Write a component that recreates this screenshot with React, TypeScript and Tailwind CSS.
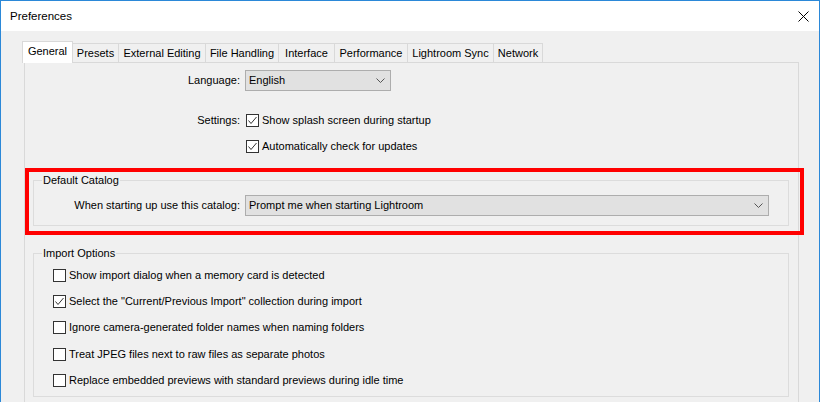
const tabs = [
  { name: "General", w: "w-[51px]" },
  { name: "Presets", w: "w-[46px]" },
  { name: "External Editing", w: "w-[87px]" },
  { name: "File Handling", w: "w-[73px]" },
  { name: "Interface", w: "w-[56px]" },
  { name: "Performance", w: "w-[73px]" },
  { name: "Lightroom Sync", w: "w-[86px]" },
  { name: "Network", w: "w-[49px]" },
];

const importOptions = [
  { label: "Show import dialog when a memory card is detected", checked: false },
  { label: 'Select the "Current/Previous Import" collection during import', checked: true },
  { label: "Ignore camera-generated folder names when naming folders", checked: false },
  { label: "Treat JPEG files next to raw files as separate photos", checked: false },
  { label: "Replace embedded previews with standard previews during idle time", checked: false },
];

function Checkbox({ checked }: { checked: boolean }) {
  return (
    <span className="flex h-[13px] w-[13px] shrink-0 items-center justify-center border border-[#333] bg-white">
      {checked && (
        <svg width="11" height="11" viewBox="0 0 11 11">
          <polyline points="1.5,5.5 4,8.5 9.5,2" fill="none" stroke="#333" strokeWidth="1" />
        </svg>
      )}
    </span>
  );
}

function Select({ value, width }: { value: string; width: string }) {
  return (
    <div className={`flex h-[21px] ${width} items-center justify-between border border-[#adadad] bg-[#e1e1e1] pl-[3px] pr-[5px]`}>
      <span>{value}</span>
      <svg width="9" height="5" viewBox="0 0 9 5">
        <polyline points="0.5,0.5 4.5,4.5 8.5,0.5" fill="none" stroke="#555" strokeWidth="1" />
      </svg>
    </div>
  );
}

export default function App() {
  return (
    <div
      className="relative flex h-[402px] w-[820px] flex-col overflow-hidden border-x border-t border-[#2b88d8] text-[11px] leading-[15px] text-black"
      style={{ fontFamily: '"Liberation Sans", Arial, sans-serif' }}
    >
      {/* title bar */}
      <div className="flex h-[30px] shrink-0 items-center justify-between bg-white pl-[9px] pr-[10px]">
        <span className="text-[11.5px]">Preferences</span>
        <svg width="11" height="11" viewBox="0 0 11 11">
          <path d="M0.5 0.5 L10.5 10.5 M10.5 0.5 L0.5 10.5" stroke="#000" strokeWidth="1" />
        </svg>
      </div>

      <div className="flex flex-1 flex-col bg-[#f0f0f0] pl-[21px] pt-[10px]">
        {/* tabs */}
        <div className="relative z-10 flex h-[21px] items-end">
          {tabs.map((t, i) =>
            i === 0 ? (
              <div
                key={t.name}
                className={`${t.w} -mb-px flex h-[22px] items-start justify-center border-x border-t border-[#d9d9d9] bg-white pt-[2px]`}
              >
                {t.name}
              </div>
            ) : (
              <div
                key={t.name}
                className={`${t.w} flex h-[19px] items-center justify-center border-r border-t border-[#d9d9d9] bg-[#f0f0f0]`}
              >
                {t.name}
              </div>
            )
          )}
        </div>

        {/* panel */}
        <div className="ml-[2px] flex h-[400px] w-[775px] flex-col border border-[#d9d9d9] bg-[#f0f0f0]">
          <div className="mt-[7px] flex h-[21px] items-center">
            <span className="w-[215px] text-right">Language:</span>
            <div className="ml-[5px]">
              <Select value="English" width="w-[146px]" />
            </div>
          </div>

          <div className="mt-[22px] flex h-[14px] items-center">
            <span className="w-[215px] text-right">Settings:</span>
            <div className="ml-[6px] flex items-center gap-[3px]">
              <Checkbox checked />
              <span>Show splash screen during startup</span>
            </div>
          </div>
          <div className="mt-[12px] flex h-[14px] items-center pl-[221px]">
            <div className="flex items-center gap-[3px]">
              <Checkbox checked />
              <span>Automatically check for updates</span>
            </div>
          </div>

          {/* Default Catalog */}
          <fieldset className="ml-[8px] mt-[21px] w-[756px] border border-[#dcdcdc] pb-[9px]">
            <legend className="ml-[8px] px-px text-[11px] leading-[13px]">Default Catalog</legend>
            <div className="mt-[8px] flex h-[21px] items-center">
              <span className="w-[206px] text-right">When starting up use this catalog:</span>
              <div className="ml-[5px]">
                <Select value="Prompt me when starting Lightroom" width="w-[524px]" />
              </div>
            </div>
          </fieldset>

          {/* Import Options */}
          <fieldset className="ml-[8px] mt-[21px] w-[756px] border border-[#dcdcdc] pb-[3px]">
            <legend className="ml-[8px] px-px text-[11px] leading-[13px]">Import Options</legend>
            <div className="mt-[2px] flex flex-col">
              {importOptions.map((o) => (
                <div key={o.label} className="flex h-[26.3px] items-center gap-[3px] pl-[19px]">
                  <Checkbox checked={o.checked} />
                  <span>{o.label}</span>
                </div>
              ))}
            </div>
          </fieldset>
        </div>
      </div>

      {/* annotation box */}
      <div className="pointer-events-none absolute left-[24px] top-[167px] h-[67px] w-[779px] border-4 border-[#ff0000]" />
    </div>
  );
}
